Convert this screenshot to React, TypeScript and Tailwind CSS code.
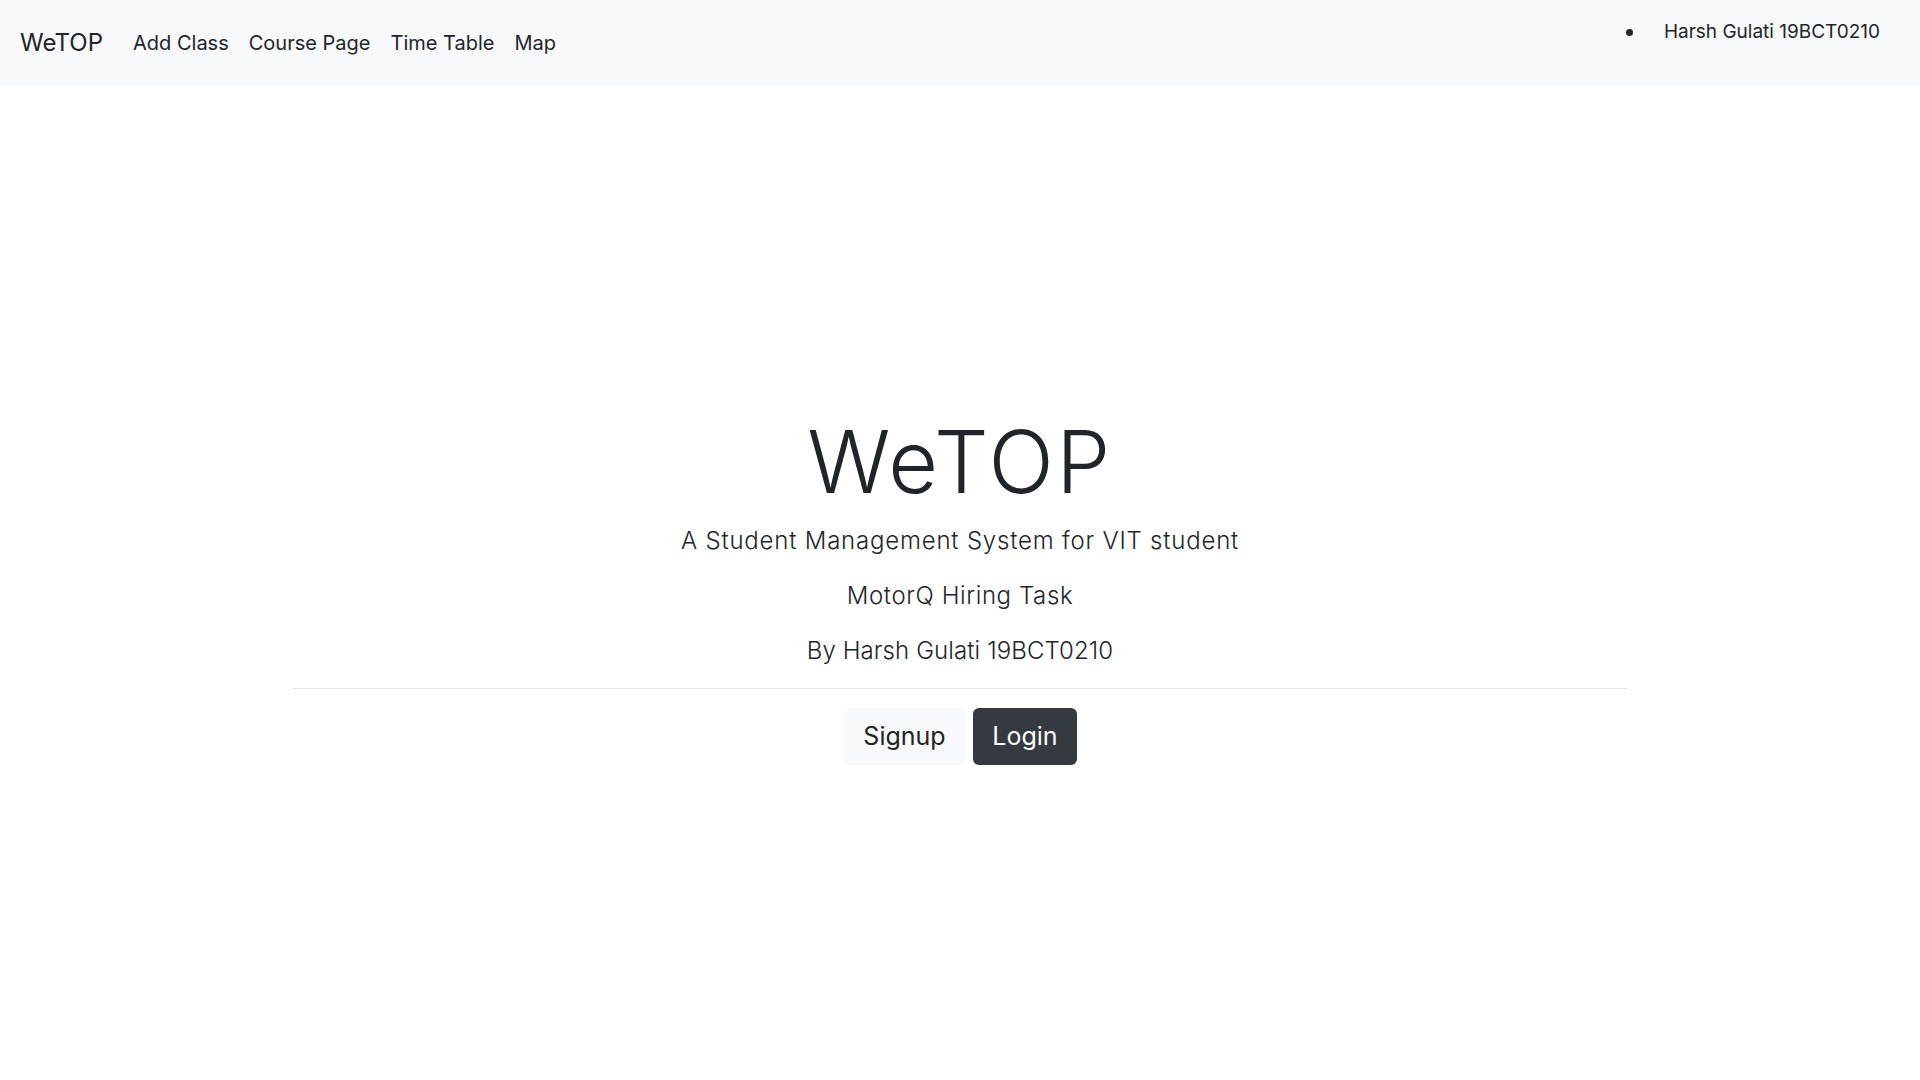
const navLinks = ['Add Class', 'Course Page', 'Time Table', 'Map'];

const font = "font-['Inter','Liberation_Sans',sans-serif]";

export default function App() {
  return (
    <div className={`min-h-screen bg-white text-[#212529] ${font}`}>
      {/* navbar */}
      <nav className="flex h-[86px] items-start justify-between bg-[#f8f9fa] px-[20px]">
        <div className="flex items-center pt-[27px]">
          <a href="#" className="text-[24px] leading-[32px] text-[#212529]">
            WeTOP
          </a>
          <ul className="ml-[20px] flex items-center">
            {navLinks.map((link) => (
              <li key={link}>
                <a href="#" className="block px-[10px] text-[20px] leading-[28px] text-[#212529]">
                  {link}
                </a>
              </li>
            ))}
          </ul>
        </div>
        <ul className="flex items-center pr-[20px] pt-[18px]">
          <li className="flex items-center">
            <span className="mr-[31px] h-[7px] w-[7px] rounded-full bg-[#212529]" />
            <span className="text-[19px] leading-[28px] text-[#212529]">Harsh Gulati 19BCT0210</span>
          </li>
        </ul>
      </nav>

      {/* hero */}
      <main className="flex flex-col items-center pt-[326px]">
        <h1 className="text-[86px] font-light leading-[100px] tracking-[2.5px]">WeTOP</h1>
        <p className="mt-[14px] text-[24px] font-light leading-[30px] tracking-[0.8px]">
          A Student Management System for VIT student
        </p>
        <p className="mt-[25px] text-[24px] font-light leading-[30px] tracking-[0.6px]">MotorQ Hiring Task</p>
        <p className="mt-[25px] text-[24px] font-light leading-[30px] tracking-[0.1px]">
          By Harsh Gulati 19BCT0210
        </p>
        <hr className="mt-[22px] w-[1334px] border-t border-[#e3e3e3]" />
        <div className="mt-[19px] flex gap-[7px]">
          <button className="h-[57px] w-[123px] rounded-[6px] bg-[#f8f9fa] text-[25px] text-[#212529]">
            Signup
          </button>
          <button className="h-[57px] w-[104px] rounded-[6px] bg-[#343a40] text-[25px] text-white">
            Login
          </button>
        </div>
      </main>
    </div>
  );
}
